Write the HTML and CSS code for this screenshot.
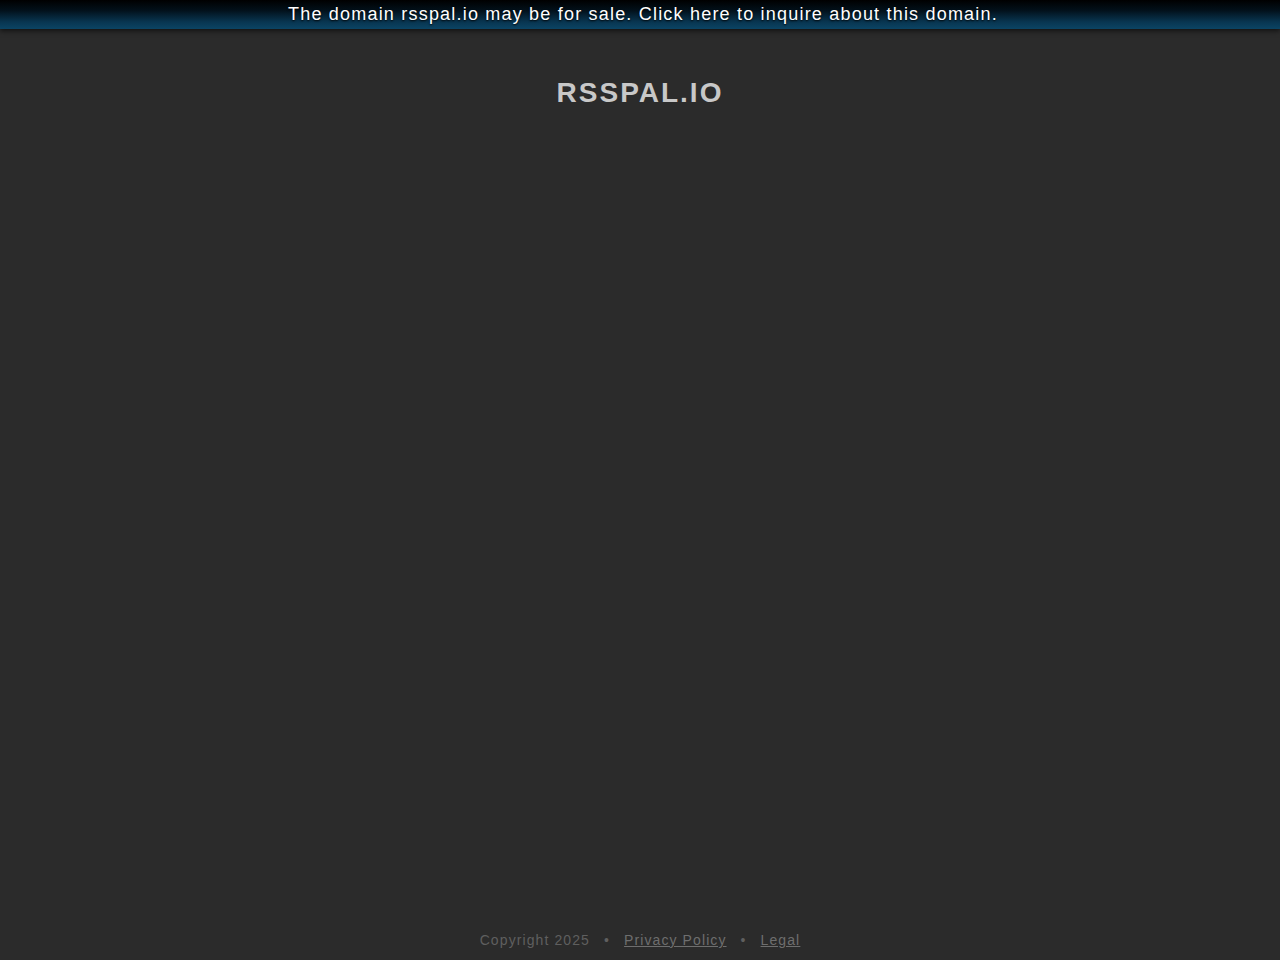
FILE: index.html
```html
<!DOCTYPE html>
<html>
<head>
<meta charset="utf-8">
<link rel="stylesheet" href="styles.css">
</head>
<body>
<div class="page">
  <a class="sale-bar" href="#">The domain rsspal.io may be for sale. Click here to inquire about this domain.</a>
  <h1 class="title">RSSPAL.IO</h1>
  <div class="spacer"></div>
  <div class="footer">
    <span>Copyright 2025</span>
    <span class="dot">•</span>
    <a href="#">Privacy Policy</a>
    <span class="dot">•</span>
    <a href="#">Legal</a>
  </div>
</div>
</body>
</html>
```
FILE: styles.css
```css
html, body {
  margin: 0;
  padding: 0;
  height: 100%;
  background: #2b2b2b;
  font-family: "Liberation Sans", Arial, sans-serif;
}
.page {
  min-height: 100%;
  display: flex;
  flex-direction: column;
}
.sale-bar {
  display: block;
  height: 29px;
  line-height: 28px;
  padding-left: 6px;
  text-align: center;
  font-size: 18px;
  letter-spacing: 1.2px;
  color: #ffffff;
  text-decoration: none;
  text-shadow: 0 1px 2px #000;
  background: linear-gradient(to bottom, #000000 0%, #02101a 35%, #083550 75%, #0b4464 100%);
  box-shadow: 0 2px 5px rgba(0,0,0,0.6);
  position: relative;
  z-index: 1;
}
.title {
  margin: 48px 0 0;
  text-align: center;
  font-size: 28px;
  font-weight: bold;
  letter-spacing: 2px;
  color: #c8c8c8;
  line-height: 32px;
}
.spacer { flex: 1; }
.footer {
  display: flex;
  justify-content: center;
  gap: 12px;
  font-size: 14px;
  letter-spacing: 1.1px;
  color: #5f5f5f;
  padding-bottom: 12px;
  line-height: 16px;
}
.footer a {
  color: #6e6e6e;
  text-decoration: underline;
}
.dot { margin: 0 2px; }
```
